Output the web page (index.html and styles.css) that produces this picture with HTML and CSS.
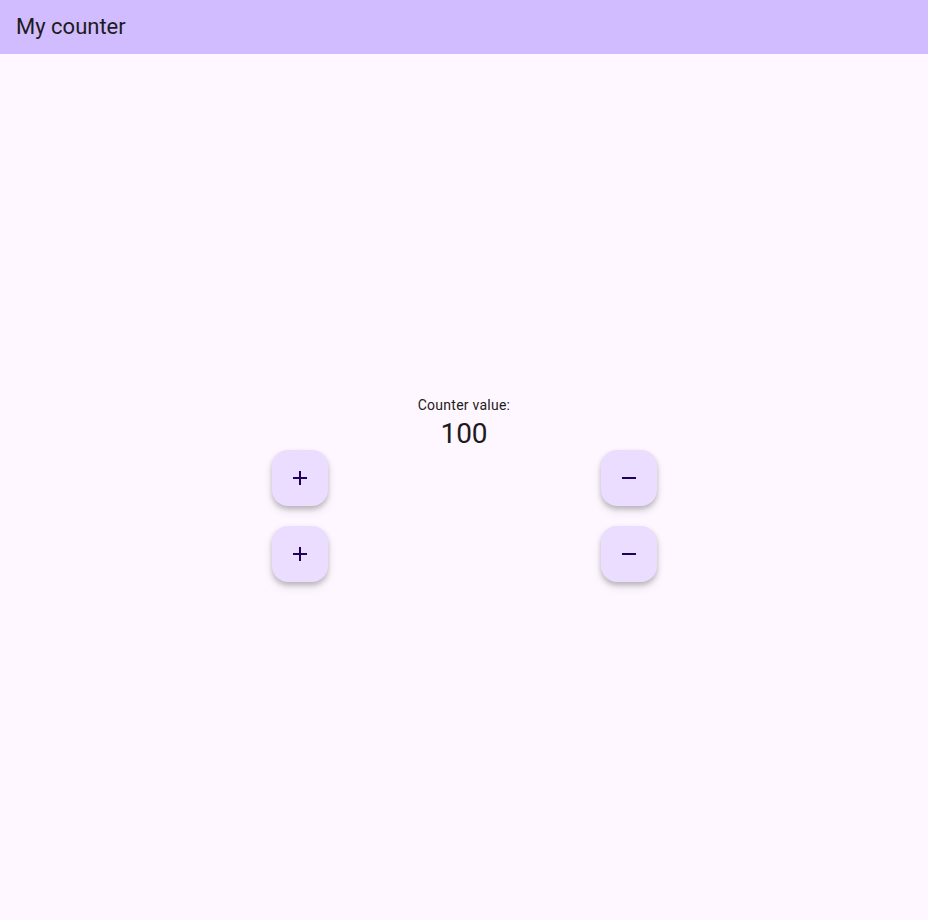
FILE: index.html
```html
<!DOCTYPE html>
<html>
<head>
<meta charset="utf-8">
<link rel="stylesheet" href="styles.css">
</head>
<body>
<header class="appbar"><span class="title">My counter</span></header>
<main class="body">
  <div class="column">
    <div class="label">Counter value:</div>
    <div class="value">100</div>
    <div class="row">
      <button class="fab" aria-label="increment"><svg width="24" height="24" viewBox="0 0 24 24"><path d="M19 13h-6v6h-2v-6H5v-2h6V5h2v6h6v2z" fill="#21005D"/></svg></button>
      <button class="fab" aria-label="decrement"><svg width="24" height="24" viewBox="0 0 24 24"><path d="M19 13H5v-2h14v2z" fill="#21005D"/></svg></button>
    </div>
    <div class="row">
      <button class="fab" aria-label="increment"><svg width="24" height="24" viewBox="0 0 24 24"><path d="M19 13h-6v6h-2v-6H5v-2h6V5h2v6h6v2z" fill="#21005D"/></svg></button>
      <button class="fab" aria-label="decrement"><svg width="24" height="24" viewBox="0 0 24 24"><path d="M19 13H5v-2h14v2z" fill="#21005D"/></svg></button>
    </div>
  </div>
</main>
</body>
</html>
```
FILE: styles.css
```css
html, body {
  margin: 0;
  padding: 0;
  height: 100%;
}
body {
  background: #FEF7FF;
  font-family: Roboto, "Noto Sans", sans-serif;
  color: #1D1B20;
  display: flex;
  flex-direction: column;
}
.appbar {
  height: 54px;
  flex: none;
  background: #D0BCFF;
  display: flex;
  align-items: center;
  padding: 0 16px;
}
.title {
  font-size: 22px;
  line-height: 28px;
  color: #1D1B20;
}
.body {
  flex: 1;
  display: flex;
  align-items: center;
  justify-content: center;
}
.column {
  display: flex;
  flex-direction: column;
  align-items: center;
  padding-top: 2px;
}
.label {
  font-size: 14px;
  line-height: 18px;
  padding-top: 2px;
  letter-spacing: 0.25px;
  color: #1D1B20;
}
.value {
  font-size: 28px;
  line-height: 32px;
  padding-top: 4px;
  color: #1D1B20;
}
.row {
  width: 385px;
  display: flex;
  justify-content: space-between;
  margin-bottom: 20px;
}
.row:last-child {
  margin-bottom: 0;
}
.fab {
  width: 56px;
  height: 56px;
  border: none;
  border-radius: 16px;
  background: #EADDFF;
  display: flex;
  align-items: center;
  justify-content: center;
  padding: 0;
  box-shadow: 0 3px 5px rgba(0,0,0,0.2), 0 5px 10px rgba(0,0,0,0.1);
}
```
